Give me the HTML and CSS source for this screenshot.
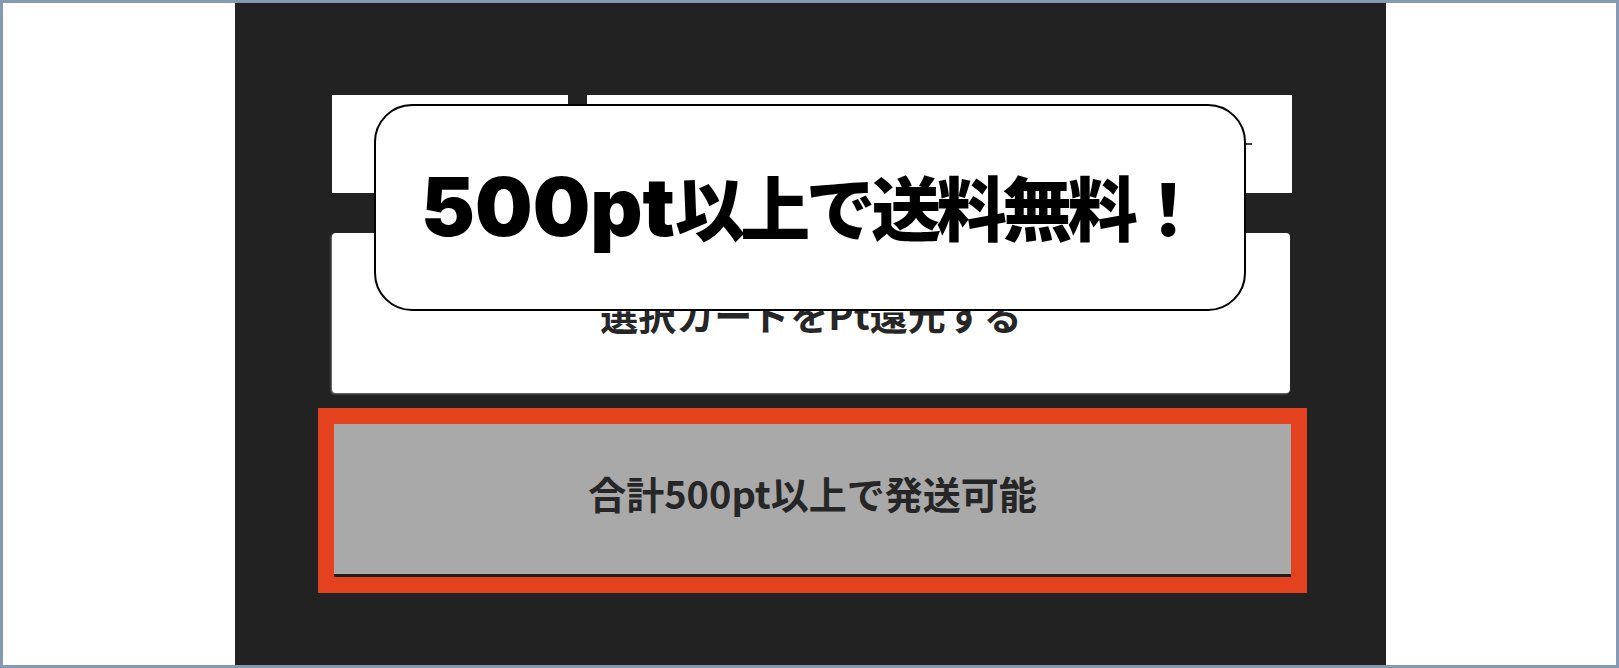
FILE: index.html
```html
<!DOCTYPE html>
<html lang="ja">
<head>
<meta charset="utf-8">
<title>送料無料</title>
<link rel="stylesheet" href="styles.css">
</head>
<body>
<div class="frame">
  <div class="panel">
    <div class="tabs">
      <div class="tab tab-small"></div>
      <div class="tab tab-wide"><span class="tab-dash"></span></div>
    </div>
    <div class="btn btn-white">選択カードをPt還元する</div>
    <div class="btn btn-gray">合計500pt以上で発送可能</div>
    <div class="callout"><span class="callout-latin">500pt</span><span class="callout-cjk">以上で送料無料！</span></div>
  </div>
</div>
</body>
</html>
```

FILE: styles.css
```css
html, body {
  margin: 0;
  padding: 0;
  width: 1619px;
  height: 668px;
  overflow: hidden;
  background: #ffffff;
  font-family: "Noto Sans CJK JP", "Noto Sans", sans-serif;
}

.frame {
  box-sizing: border-box;
  width: 1619px;
  height: 668px;
  border: 3px solid #8799b2;
  background: #ffffff;
  display: flex;
}

.panel {
  position: relative;
  box-sizing: border-box;
  margin-left: 232px;
  width: 1151px;
  height: 100%;
  background: #222222;
  padding: 92px 94px 0 97px;
  display: flex;
  flex-direction: column;
}

.tabs {
  display: flex;
  gap: 19px;
  height: 98px;
}

.tab {
  background: #ffffff;
}

.tab-small {
  width: 236px;
}

.tab-wide {
  flex: 1;
  display: flex;
  align-items: center;
  justify-content: flex-end;
  padding-right: 40px;
}

.tab-dash {
  width: 8px;
  height: 2px;
  background: #3a4250;
}

.btn {
  display: flex;
  align-items: center;
  justify-content: center;
  font-size: 38px;
  font-weight: 700;
  color: #262626;
}

.btn-white {
  margin-top: 40px;
  margin-right: 2px;
  height: 160px;
  background: #ffffff;
  border-radius: 4px;
  box-shadow: -1px 1px 2px rgba(160, 160, 160, 0.7);
}

.btn-gray {
  margin-top: 31px;
  margin-left: 2px;
  margin-right: 1px;
  height: 153px;
  padding-bottom: 14px;
  box-sizing: border-box;
  background: #a9a9a9;
  border-bottom: 3px solid #1c1c1c;
  outline: 16px solid #e4411f;
  outline-offset: 0;
}

.callout {
  position: absolute;
  left: 139px;
  top: 101px;
  box-sizing: border-box;
  width: 872px;
  height: 207px;
  padding-bottom: 4px;
  background: #ffffff;
  border: 2px solid #000000;
  border-radius: 38px;
  display: flex;
  align-items: baseline;
  justify-content: center;
  align-content: center;
  flex-wrap: wrap;
  color: #000000;
}

.callout-latin {
  font-family: Inter, "Liberation Sans", sans-serif;
  font-size: 81px;
  font-weight: 900;
  letter-spacing: 0;
}

.callout-cjk {
  font-family: "Noto Sans CJK JP", sans-serif;
  font-size: 70px;
  font-weight: 900;
  letter-spacing: -4.5px;
}
```
